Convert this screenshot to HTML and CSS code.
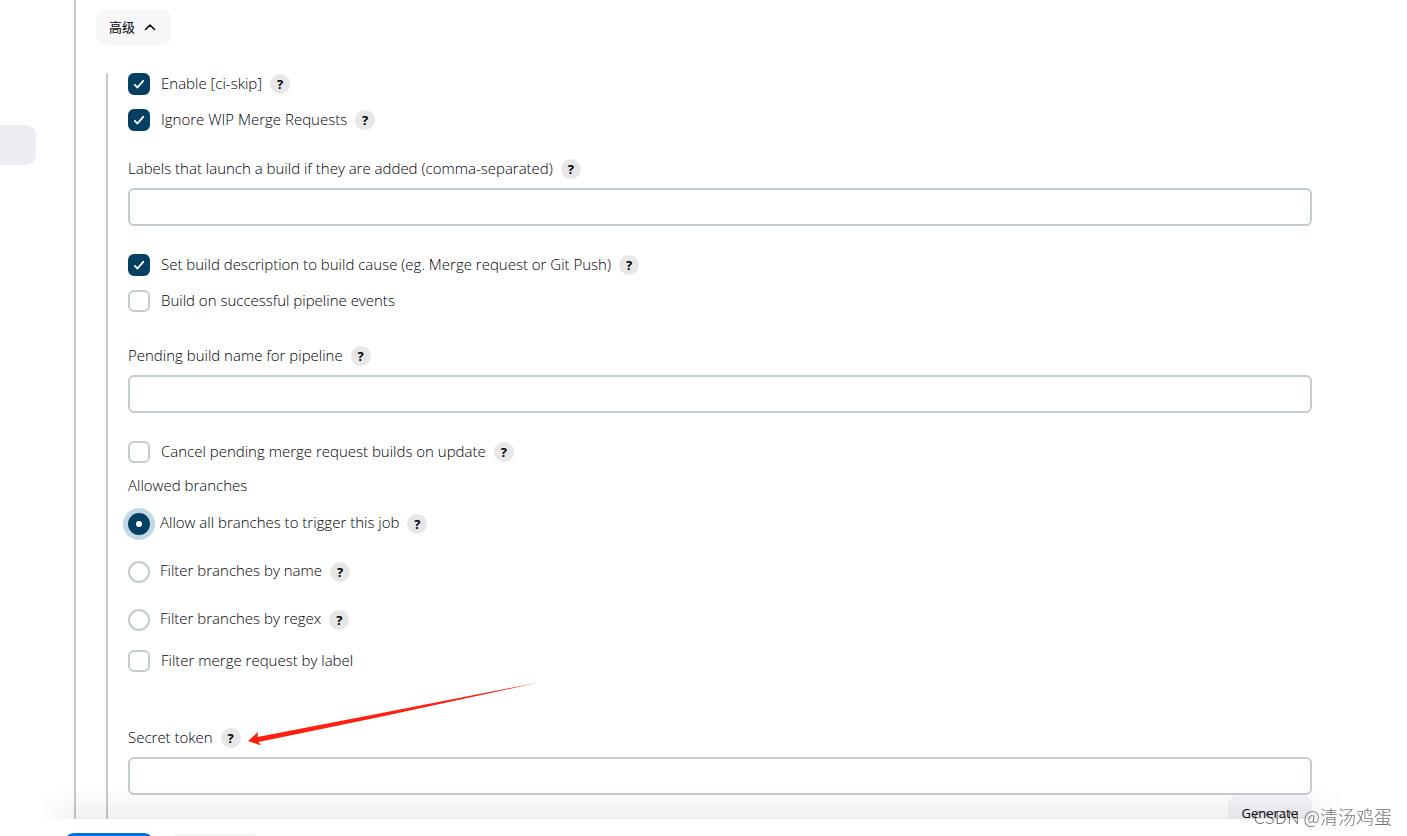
FILE: index.html
```
<!DOCTYPE html>
<html lang="zh-CN">
<head>
    <meta charset="UTF-8">
    <meta name="viewport" content="width=device-width, initial-scale=1.0">
    <title>Jenkins</title>
    <link rel="stylesheet" href="styles.css">
</head>
<body>
    <div class="page">
        <aside class="side-panel">
            <div class="task-active"></div>
        </aside>

        <main class="config">
            <button type="button" class="btn btn-advanced">
                高级
                <svg class="chevron" viewBox="0 0 12 12" aria-hidden="true"><path d="M1.500 8.500 6 4l4.500 4.500"/></svg>
            </button>

            <div class="advanced">
                <div class="group">
                    <div class="option">
                        <input type="checkbox" id="ciSkip" checked>
                        <label for="ciSkip">Enable [ci-skip]</label>
                        <button type="button" class="help">?</button>
                    </div>
                    <div class="option">
                        <input type="checkbox" id="ignoreWip" checked>
                        <label for="ignoreWip">Ignore WIP Merge Requests</label>
                        <button type="button" class="help">?</button>
                    </div>
                </div>

                <div class="field">
                    <div class="field-label">
                        <label for="labels">Labels that launch a build if they are added (comma-separated)</label>
                        <button type="button" class="help">?</button>
                    </div>
                    <input type="text" id="labels">
                </div>

                <div class="group">
                    <div class="option">
                        <input type="checkbox" id="setDescription" checked>
                        <label for="setDescription">Set build description to build cause (eg. Merge request or Git Push)</label>
                        <button type="button" class="help">?</button>
                    </div>
                    <div class="option">
                        <input type="checkbox" id="pipelineEvents">
                        <label for="pipelineEvents">Build on successful pipeline events</label>
                    </div>
                </div>

                <div class="field field-pending">
                    <div class="field-label">
                        <label for="pendingName">Pending build name for pipeline</label>
                        <button type="button" class="help">?</button>
                    </div>
                    <input type="text" id="pendingName">
                </div>

                <div class="option">
                    <input type="checkbox" id="cancelPending">
                    <label for="cancelPending">Cancel pending merge request builds on update</label>
                    <button type="button" class="help">?</button>
                </div>

                <div class="branches" role="radiogroup" aria-labelledby="branchesTitle">
                    <div class="branches-title" id="branchesTitle">Allowed branches</div>
                    <div class="option">
                        <input type="radio" name="branches" id="allBranches" class="focused" checked>
                        <label for="allBranches">Allow all branches to trigger this job</label>
                        <button type="button" class="help">?</button>
                    </div>
                    <div class="option">
                        <input type="radio" name="branches" id="byName">
                        <label for="byName">Filter branches by name</label>
                        <button type="button" class="help">?</button>
                    </div>
                    <div class="option">
                        <input type="radio" name="branches" id="byRegex">
                        <label for="byRegex">Filter branches by regex</label>
                        <button type="button" class="help">?</button>
                    </div>
                </div>

                <div class="option">
                    <input type="checkbox" id="byLabel">
                    <label for="byLabel">Filter merge request by label</label>
                </div>

                <div class="field field-token">
                    <div class="field-label">
                        <label for="secretToken">Secret token</label>
                        <button type="button" class="help">?</button>
                        <svg class="arrow" viewBox="0 0 290 66" aria-hidden="true"><path d="M0 60 10 51 9.500 56Q150 29 290 1.500Q150 33 10.500 61L13 64.500Z"/></svg>
                    </div>
                    <input type="text" id="secretToken">
                    <button type="button" class="btn btn-generate">Generate</button>
                </div>
            </div>
        </main>
    </div>

    <div class="bottom-bar">
        <button type="button" class="btn btn-save" aria-label="Save"></button>
        <button type="button" class="btn" aria-label="Apply"></button>
    </div>

    <div class="watermark">CSDN @清汤鸡蛋</div>
</body>
</html>
```

FILE: styles.css
```
* {
    box-sizing: border-box;
}
body {
    margin: 0;
    overflow: hidden;
    font-family: "Open Sans", "Noto Sans CJK SC", sans-serif;
    font-size: 15px;
    font-weight: 300;
    line-height: 20px;
    color: #000008;
    background: #fff;
}
button, input {
    margin: 0;
    font: inherit;
    color: inherit;
}
.page {
    display: flex;
    height: 100vh;
    overflow: hidden;
}
.side-panel {
    flex: 0 0 74px;
    padding-top: 125px;
}
.task-active {
    width: 36px;
    height: 40px;
    border-radius: 0 10px 10px 0;
    background: #ecedf3;
}
.config {
    flex: 1;
    height: max-content;
    padding: 9px 95px 40px 20px;
    border-left: 2px solid #c3ccd1;
}
.btn {
    height: 36px;
    border: none;
    border-radius: 10px;
    background: #f7f7fa;
    cursor: pointer;
}
.btn-advanced {
    display: flex;
    align-items: center;
    gap: 9px;
    padding: 0 15px 0 13px;
    font-size: 13px;
    font-weight: 400;
}
.chevron {
    width: 12px;
    height: 12px;
    fill: none;
    stroke: currentColor;
    stroke-width: 1.500;
    stroke-linecap: round;
    stroke-linejoin: round;
}
.advanced {
    margin: 28px 0 0 10px;
    padding-left: 20px;
    border-left: 2px solid #c3ccd1;
}
.group {
    display: grid;
    gap: 14px;
}
.option {
    display: flex;
    align-items: center;
    height: 22px;
}
label {
    padding-bottom: 2px;
}
.option label {
    margin-left: 11px;
}
input[type="checkbox"],
input[type="radio"] {
    flex: none;
    width: 22px;
    height: 22px;
    appearance: none;
    border: 2px solid #c3ccd1;
    border-radius: 6px;
    background: #fff;
}
input[type="radio"] {
    border-radius: 50%;
}
input[type="checkbox"]:checked {
    border-color: #053f61;
    background: #053f61 url("data:image/svg+xml,%3Csvg xmlns='http://www.w3.org/2000/svg' viewBox='0 0 18 18'%3E%3Cpath d='M4.800 9.800l2.700 2.700 5.700-6.700' fill='none' stroke='white' stroke-width='1.800' stroke-linecap='round' stroke-linejoin='round'/%3E%3C/svg%3E") center / 18px no-repeat;
}
input[type="radio"]:checked {
    border: 8px solid #053f61;
}
input[type="radio"].focused {
    box-shadow: 0 0 0 5px #c1d8e6;
}
.help {
    flex: none;
    width: 20px;
    height: 20px;
    margin-left: 8px;
    padding: 0;
    border: none;
    border-radius: 50%;
    background: #e7e7e7;
    font-size: 13px;
    font-weight: 700;
    line-height: 20px;
    text-align: center;
}
.field {
    margin: 28px 0;
}
.field-pending {
    margin-top: 34px;
}
.field-token {
    margin: 56px 0 0;
}
.field-label {
    position: relative;
    display: flex;
    align-items: center;
    height: 20px;
    margin-bottom: 9px;
}
input[type="text"] {
    display: block;
    width: 100%;
    height: 38px;
    padding: 0 10px;
    border: 2px solid #c3ccd1;
    border-radius: 6px;
    background: #fff;
}
.branches {
    display: grid;
    gap: 26px;
    margin: 12px 0 19px;
}
.branches-title {
    margin-bottom: -8px;
}
.branches label {
    margin-left: 10px;
    padding-bottom: 4px;
}
.btn-generate {
    display: block;
    margin-left: auto;
    padding: 0 14px;
    font-size: 13px;
    font-weight: 400;
    background: #f3f3f8;
}
.arrow {
    position: absolute;
    left: 120px;
    top: -47px;
    width: 290px;
    height: 66px;
    fill: #ff2010;
}
.bottom-bar {
    position: fixed;
    left: 0;
    right: 0;
    bottom: 0;
    display: flex;
    gap: 16px;
    height: 17px;
    padding: 14px 0 0 64px;
    background: #fff;
}
/* shadow the bar casts on the form */
.bottom-bar::before {
    content: "";
    position: absolute;
    left: 38px;
    right: 62px;
    bottom: 100%;
    height: 32px;
    background: linear-gradient(rgba(0, 0, 0, 0), rgba(0, 0, 0, 0.06));
    mask-image: linear-gradient(90deg, transparent, #000 40px, #000 calc(100% - 40px), transparent);
    pointer-events: none;
}
.bottom-bar .btn {
    flex: none;
    width: 90px;
}
.bottom-bar .btn-save {
    background: #006fe6;
}
.watermark {
    position: fixed;
    right: 15px;
    bottom: 7px;
    font-family: "Noto Sans CJK SC", sans-serif;
    font-size: 18px;
    font-weight: 300;
    line-height: 26px;
    color: rgba(80, 80, 80, 0.8);
}
```
